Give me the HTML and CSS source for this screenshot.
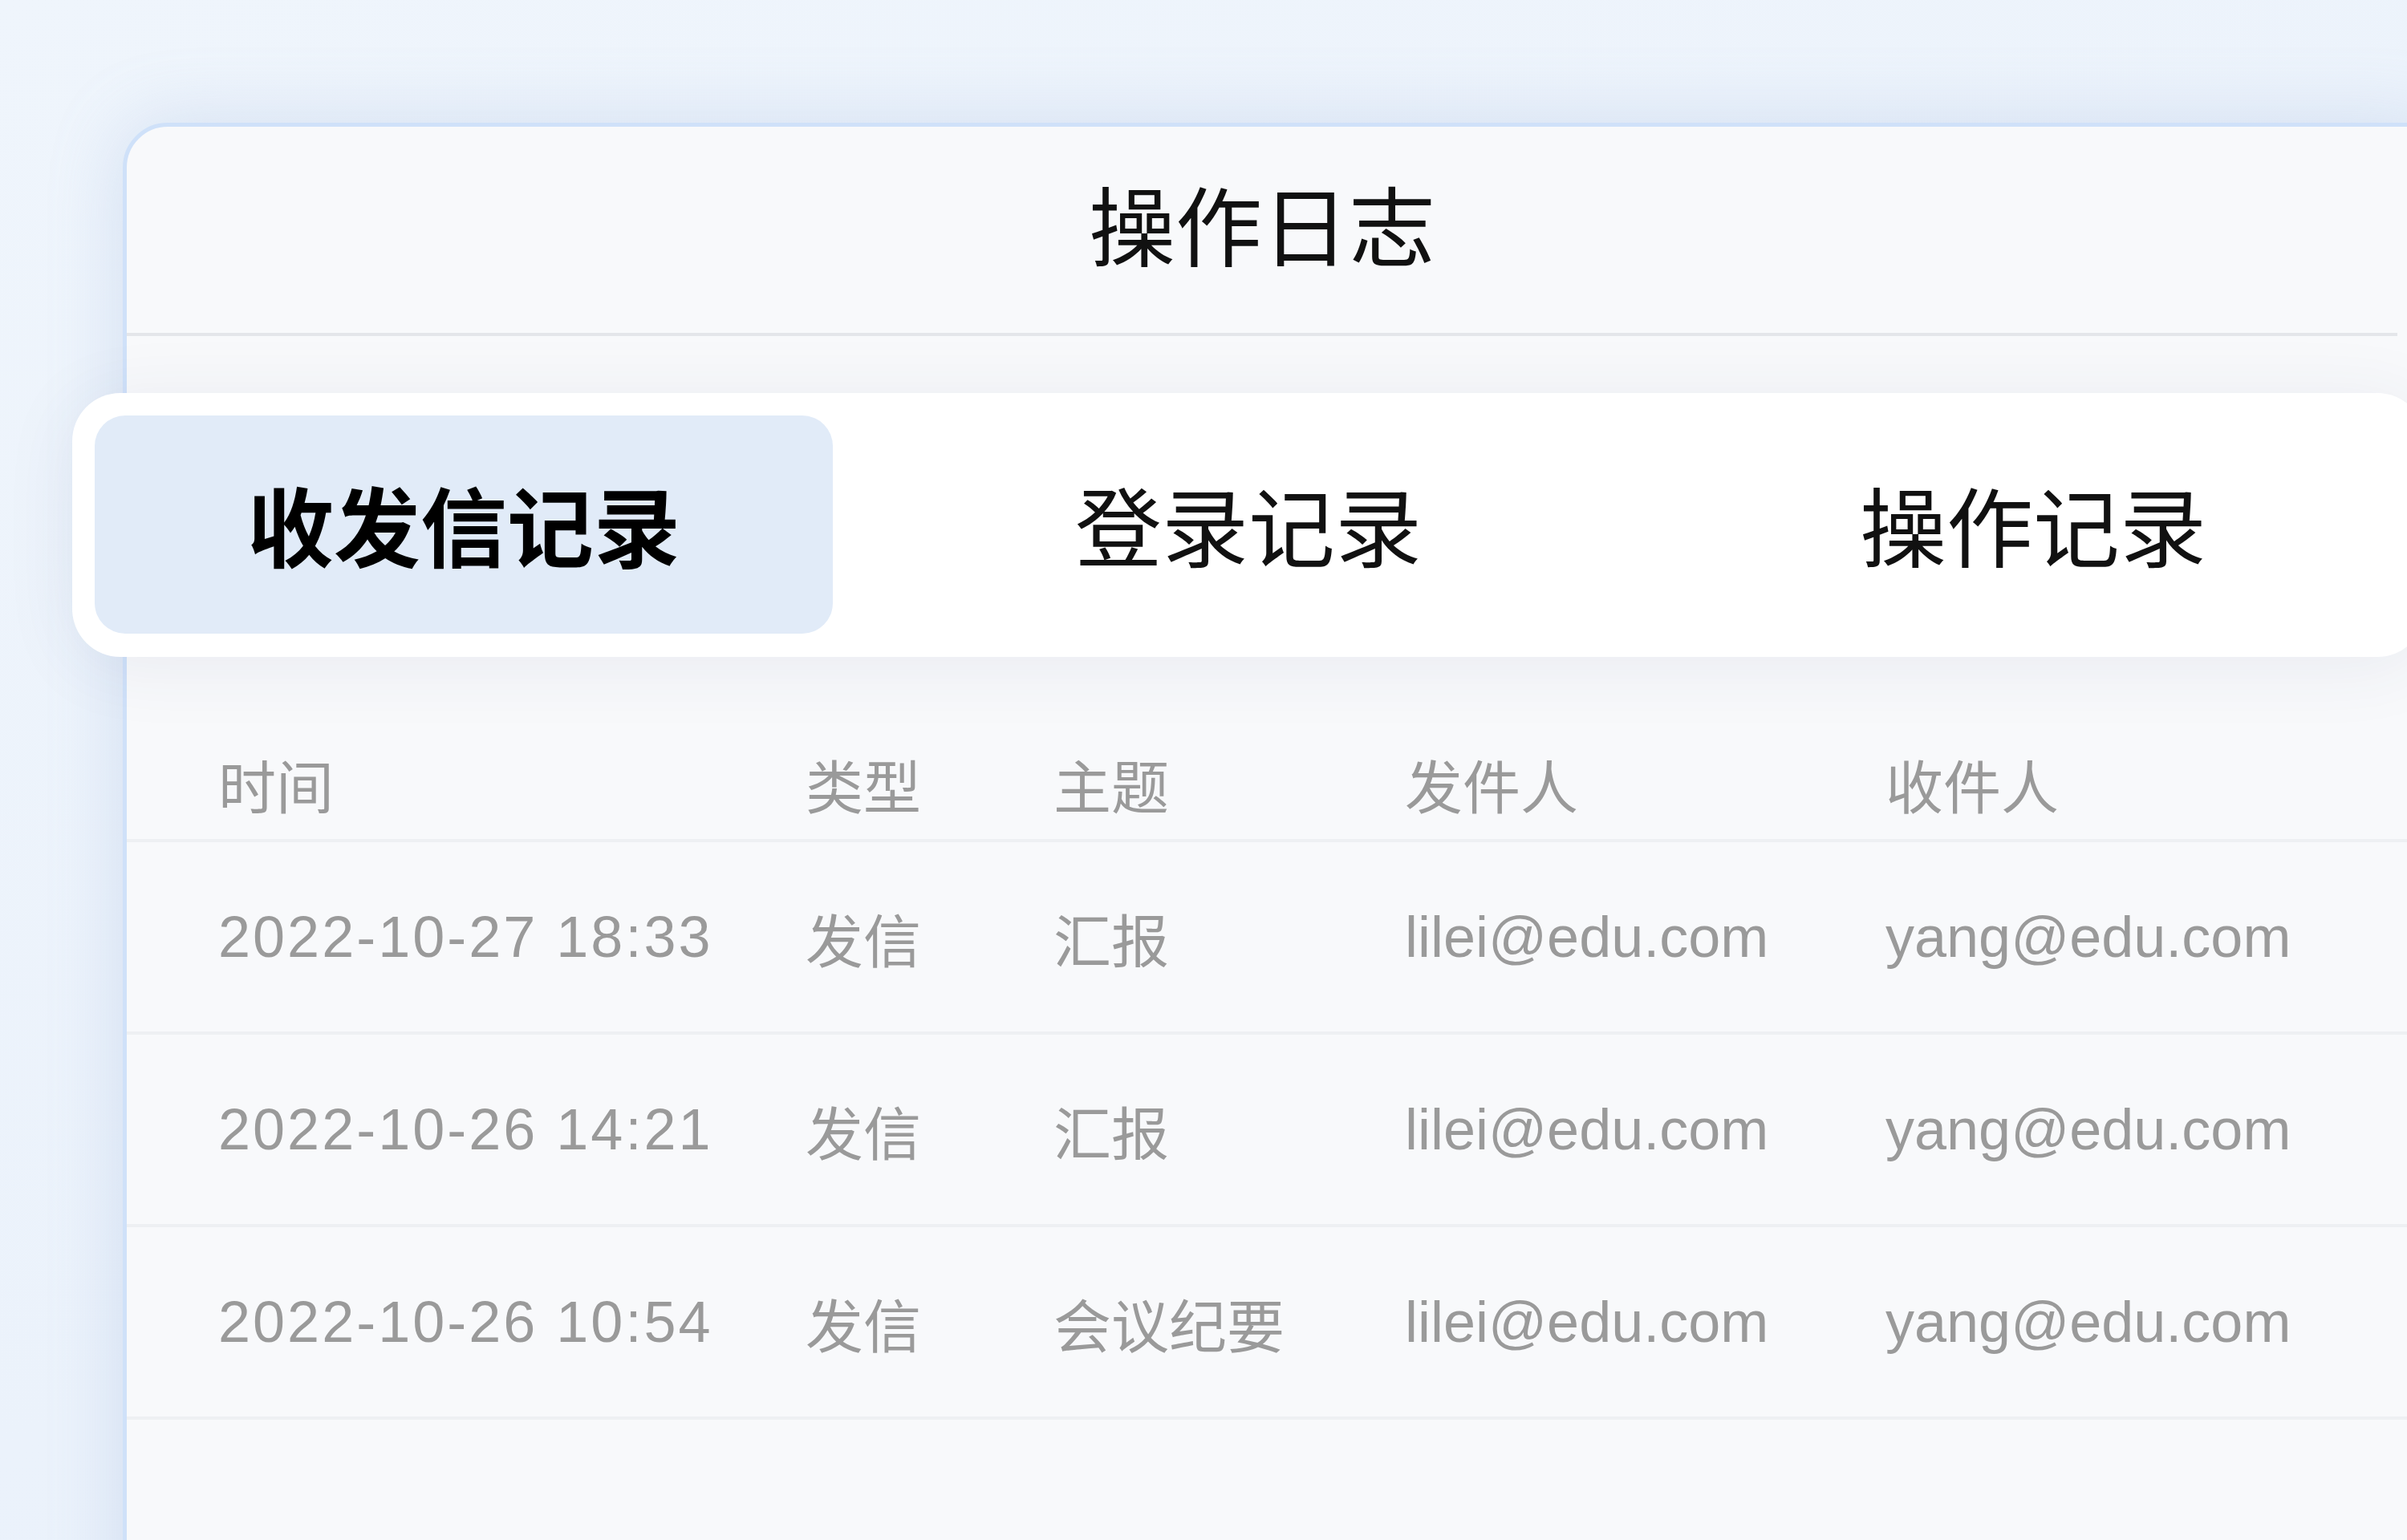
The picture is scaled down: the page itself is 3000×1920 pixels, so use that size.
FILE: index.html
```html
<!DOCTYPE html>
<html lang="zh-CN">
<head>
    <meta charset="UTF-8">
    <meta name="viewport" content="width=device-width, initial-scale=1.0">
    <title>操作日志</title>
    <link rel="stylesheet" href="styles.css">
</head>
<body>
    <div class="panel">
        <!-- 头部 -->
        <header class="panel-header">
            <h1 class="panel-title">操作日志</h1>
        </header>

        <!-- 标签切换 -->
        <nav class="tabs">
            <div class="tab active">收发信记录</div>
            <div class="tab">登录记录</div>
            <div class="tab">操作记录</div>
        </nav>

        <!-- 记录列表 -->
        <section class="log-table">
            <div class="log-row log-head">
                <span>时间</span>
                <span>类型</span>
                <span>主题</span>
                <span>发件人</span>
                <span>收件人</span>
            </div>
            <div class="log-row">
                <span class="date">2022-10-27 18:33</span>
                <span>发信</span>
                <span>汇报</span>
                <span>lilei@edu.com</span>
                <span>yang@edu.com</span>
            </div>
            <div class="log-row">
                <span class="date">2022-10-26 14:21</span>
                <span>发信</span>
                <span>汇报</span>
                <span>lilei@edu.com</span>
                <span>yang@edu.com</span>
            </div>
            <div class="log-row">
                <span class="date">2022-10-26 10:54</span>
                <span>发信</span>
                <span>会议纪要</span>
                <span>lilei@edu.com</span>
                <span>yang@edu.com</span>
            </div>
        </section>
    </div>
</body>
</html>
```

FILE: styles.css
```css
* {
    margin: 0;
    padding: 0;
    box-sizing: border-box;
}

html, body {
    width: 3000px;
    height: 1920px;
    overflow: hidden;
}

body {
    font-family: 'Liberation Sans', 'Noto Sans CJK SC', sans-serif;
    background: linear-gradient(160deg, #eff5fc 0%, #ebf2fb 60%, #e9f1fb 100%);
    color: #111111;
    padding: 153px 0 0 153px;
}

/* 主面板 */
.panel {
    width: 2900px;
    min-height: 2000px;
    background: #f8f9fb;
    border: 5px solid #cfe1f9;
    border-radius: 56px;
    box-shadow: 0 0 90px rgba(140, 170, 215, 0.28);
}

/* 头部 */
.panel-header {
    height: 261px;
    margin-right: 60px;
    border-bottom: 4px solid #e4e6ea;
    display: flex;
    align-items: center;
    justify-content: center;
}

.panel-title {
    font-size: 108px;
    font-weight: 400;
    color: #111111;
    line-height: 1;
}

/* 标签 */
.tabs {
    width: 2933px;
    margin: 71px 0 0 -68px;
    padding: 28px 28px 29px;
    background: #ffffff;
    border-radius: 60px;
    box-shadow: 0 10px 90px rgba(50, 70, 110, 0.08);
    display: grid;
    grid-template-columns: repeat(3, 920px);
    gap: 58px;
}

.tab {
    height: 272px;
    border-radius: 38px;
    display: flex;
    align-items: center;
    justify-content: center;
    font-size: 108px;
    color: #111111;
    padding-bottom: 4px;
}

.tab.active {
    background: #e1ebf8;
    font-weight: 700;
    color: #000000;
}

/* 列表 */
.log-row {
    display: grid;
    grid-template-columns: 732px 309px 438px 599px 1fr;
    align-items: center;
    height: 240px;
    padding-left: 114px;
    border-bottom: 4px solid #eef0f3;
    font-size: 72px;
    color: #9a9a9a;
    white-space: nowrap;
}

.log-row .date {
    letter-spacing: 3px;
}

.log-head {
    height: 231px;
    padding-top: 88px;
}
```
